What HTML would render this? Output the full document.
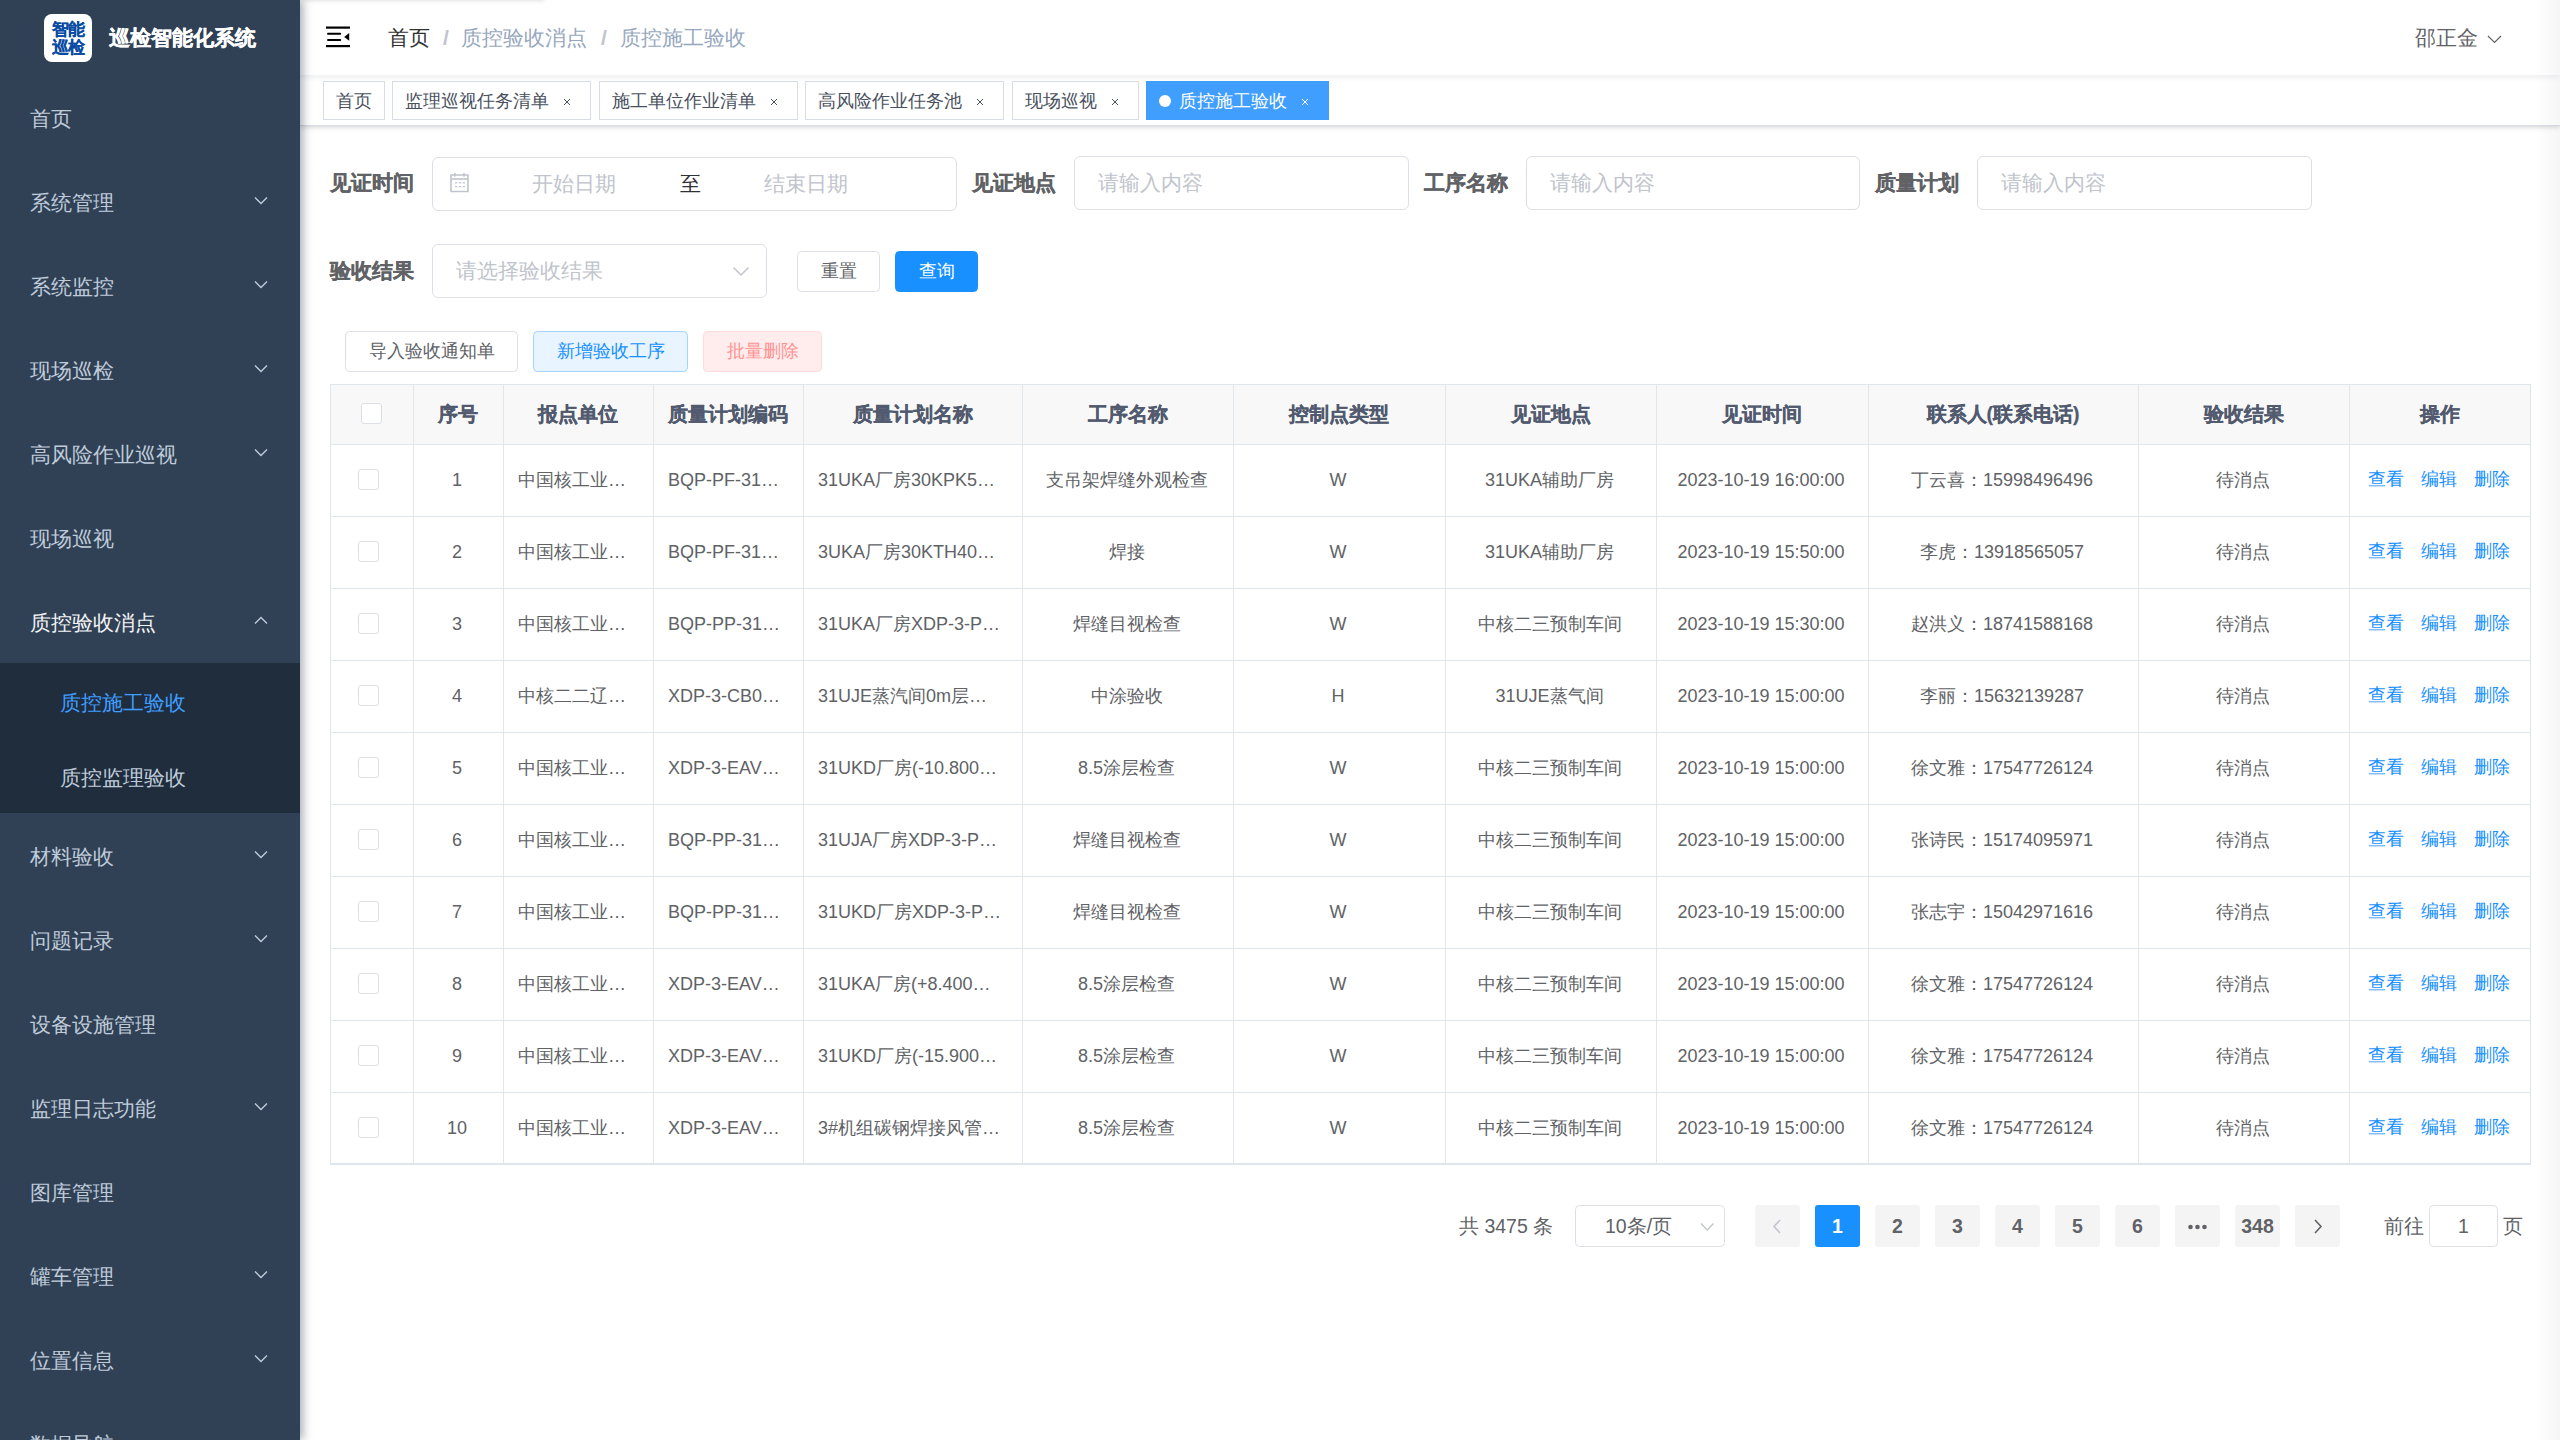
<!DOCTYPE html>
<html><head><meta charset="utf-8">
<style>
*{box-sizing:border-box;margin:0;padding:0}
html,body{width:2560px;height:1440px;overflow:hidden;background:#fff;font-family:"Liberation Sans",sans-serif;}
.abs{position:absolute}
#sidebar{position:absolute;left:0;top:0;width:300px;height:1440px;background:#304156;box-shadow:3px 0 9px rgba(0,21,41,.35);z-index:5;overflow:hidden}
.logo{position:absolute;left:44px;top:14px;width:48px;height:48px;background:#fff;border-radius:8px}
.logo span{position:absolute;left:0;width:48px;text-align:center;color:#0a4ba3;font-weight:bold;font-size:16.5px;line-height:17px;letter-spacing:-0.5px;-webkit-text-stroke:0.15px #0a4ba3}
.title{position:absolute;left:109px;top:0;height:75px;line-height:75px;color:#fff;font-weight:bold;font-size:21px;white-space:nowrap;-webkit-text-stroke:0.3px #fff}
.mi{position:absolute;left:0;width:300px;height:84px;line-height:84px;padding-top:2px;padding-left:30px;color:#bfcbd9;font-size:21px;white-space:nowrap}
.sub{position:absolute;left:0;width:300px;height:75px;line-height:75px;padding-top:2px;padding-left:60px;color:#bfcbd9;font-size:21px;background:#1f2d3d;white-space:nowrap}
.chev{position:absolute}
#navbar{position:absolute;left:300px;top:0;width:2260px;height:75px;background:#fff;box-shadow:0 1.5px 6px rgba(0,21,41,.08);z-index:3}
.bc{position:absolute;top:0;height:75px;line-height:75px;font-size:21px;white-space:nowrap}
#tags{position:absolute;left:300px;top:75px;width:2260px;height:51px;background:#fff;border-bottom:1px solid #d8dce5;box-shadow:0 1.5px 4.5px 0 rgba(0,0,0,.12),0 0 4.5px 0 rgba(0,0,0,.04);z-index:2}
.tag{position:absolute;top:6px;height:39px;line-height:37px;padding-top:1px;border:1px solid #d8dce5;color:#495060;background:#fff;font-size:18px;padding-left:12px;white-space:nowrap}
.tag .x{position:absolute}
.tag.act{background:#409eff;border-color:#409eff;color:#fff}
.dot{position:absolute;left:12px;top:13px;width:12px;height:12px;border-radius:50%;background:#fff}
.lbl{position:absolute;height:54px;line-height:54px;font-size:21px;font-weight:bold;color:#606266;white-space:nowrap;-webkit-text-stroke:0.3px #606266}
.inp{position:absolute;height:54px;border:1px solid #dcdfe6;border-radius:6px;background:#fff}
.ph{position:absolute;line-height:52px;font-size:21px;color:#c0c4cc;white-space:nowrap}
.btn{position:absolute;height:41px;line-height:39px;border:1px solid #dcdfe6;border-radius:4.5px;font-size:18px;text-align:center;color:#606266;background:#fff;white-space:nowrap}
table{border-collapse:collapse}
.th,.td{position:absolute;white-space:nowrap;text-align:center}
.th{font-size:19.5px;font-weight:bold;color:#515a6e;-webkit-text-stroke:0.25px #515a6e;line-height:60px;height:60px;top:384px}
.td{font-size:18px;color:#606266;line-height:72px;height:72px}
.cb{position:absolute;width:21px;height:21px;border:1px solid #dcdfe6;border-radius:3px;background:#fff}
.lnk{position:absolute;font-size:18px;color:#1890ff;white-space:nowrap}
.pg{position:absolute;top:1205px;height:42px;line-height:42px;width:45px;background:#f4f4f5;color:#606266;font-size:19.5px;font-weight:bold;text-align:center;border-radius:3px}
</style></head><body>

<div id="sidebar">
<div class="logo"><span style="top:7px">智能</span><span style="top:25px">巡检</span></div>
<div class="title">巡检智能化系统</div>
<div class="mi" style="top:75px">首页</div>
<div class="mi" style="top:159px">系统管理</div>
<svg class="chev" style="left:254px;top:195.5px" width="14" height="9" viewBox="0 0 14 9"><path d="M1 1.5 L7 7.5 L13 1.5" fill="none" stroke="#bfcbd9" stroke-width="1.4"/></svg>
<div class="mi" style="top:243px">系统监控</div>
<svg class="chev" style="left:254px;top:279.5px" width="14" height="9" viewBox="0 0 14 9"><path d="M1 1.5 L7 7.5 L13 1.5" fill="none" stroke="#bfcbd9" stroke-width="1.4"/></svg>
<div class="mi" style="top:327px">现场巡检</div>
<svg class="chev" style="left:254px;top:363.5px" width="14" height="9" viewBox="0 0 14 9"><path d="M1 1.5 L7 7.5 L13 1.5" fill="none" stroke="#bfcbd9" stroke-width="1.4"/></svg>
<div class="mi" style="top:411px">高风险作业巡视</div>
<svg class="chev" style="left:254px;top:447.5px" width="14" height="9" viewBox="0 0 14 9"><path d="M1 1.5 L7 7.5 L13 1.5" fill="none" stroke="#bfcbd9" stroke-width="1.4"/></svg>
<div class="mi" style="top:495px">现场巡视</div>
<div class="mi" style="top:579px;color:#f4f4f5">质控验收消点</div>
<svg class="chev" style="left:254px;top:615.5px" width="14" height="9" viewBox="0 0 14 9"><path d="M1 7.5 L7 1.5 L13 7.5" fill="none" stroke="#bfcbd9" stroke-width="1.4"/></svg>
<div class="sub" style="top:663px;color:#409eff">质控施工验收</div>
<div class="sub" style="top:738px">质控监理验收</div>
<div class="mi" style="top:813px">材料验收</div>
<svg class="chev" style="left:254px;top:849.5px" width="14" height="9" viewBox="0 0 14 9"><path d="M1 1.5 L7 7.5 L13 1.5" fill="none" stroke="#bfcbd9" stroke-width="1.4"/></svg>
<div class="mi" style="top:897px">问题记录</div>
<svg class="chev" style="left:254px;top:933.5px" width="14" height="9" viewBox="0 0 14 9"><path d="M1 1.5 L7 7.5 L13 1.5" fill="none" stroke="#bfcbd9" stroke-width="1.4"/></svg>
<div class="mi" style="top:981px">设备设施管理</div>
<div class="mi" style="top:1065px">监理日志功能</div>
<svg class="chev" style="left:254px;top:1101.5px" width="14" height="9" viewBox="0 0 14 9"><path d="M1 1.5 L7 7.5 L13 1.5" fill="none" stroke="#bfcbd9" stroke-width="1.4"/></svg>
<div class="mi" style="top:1149px">图库管理</div>
<div class="mi" style="top:1233px">罐车管理</div>
<svg class="chev" style="left:254px;top:1269.5px" width="14" height="9" viewBox="0 0 14 9"><path d="M1 1.5 L7 7.5 L13 1.5" fill="none" stroke="#bfcbd9" stroke-width="1.4"/></svg>
<div class="mi" style="top:1317px">位置信息</div>
<svg class="chev" style="left:254px;top:1353.5px" width="14" height="9" viewBox="0 0 14 9"><path d="M1 1.5 L7 7.5 L13 1.5" fill="none" stroke="#bfcbd9" stroke-width="1.4"/></svg>
<div class="mi" style="top:1401px">数据导航</div>
</div>
<div id="navbar">
<div class="abs" style="left:0;top:-8px;width:245px;height:8px;box-shadow:0 1px 4px rgba(0,0,0,.12);border-radius:4px"></div>
<svg class="abs" style="left:26px;top:26px" width="24" height="22" viewBox="0 0 24 22"><rect x="0" y="0.5" width="24" height="2.2" fill="#000"/><rect x="1" y="6.8" width="14.2" height="2" rx="1" fill="#000"/><rect x="1" y="13" width="14.2" height="2" rx="1" fill="#000"/><rect x="0" y="19" width="24" height="2.2" fill="#000"/><path d="M18.2 10.9 L23.2 7 L23.2 14.8 Z" fill="#000"/></svg>
<div class="bc" style="left:88px;color:#303133">首页</div>
<div class="bc" style="left:143px;color:#c0c4cc;font-weight:bold">/</div>
<div class="bc" style="left:161px;color:#97a8be">质控验收消点</div>
<div class="bc" style="left:301px;color:#c0c4cc;font-weight:bold">/</div>
<div class="bc" style="left:320px;color:#97a8be">质控施工验收</div>
<div class="bc" style="left:2115px;color:#606266">邵正金</div>
<svg class="abs" style="left:2187px;top:35px" width="15" height="9" viewBox="0 0 15 9"><path d="M1 1 L7.5 7.5 L14 1" fill="none" stroke="#606266" stroke-width="1.2"/></svg>
</div>
<div id="tags">
<div class="tag" style="left:23px;width:62px">首页</div>
<div class="tag" style="left:92px;width:199px">监理巡视任务清单<svg class="x" style="left:170px;top:16px" width="8" height="8" viewBox="0 0 8 8"><path d="M1 1 L7 7 M7 1 L1 7" stroke="#495060" stroke-width="1"/></svg></div>
<div class="tag" style="left:299px;width:199px">施工单位作业清单<svg class="x" style="left:170px;top:16px" width="8" height="8" viewBox="0 0 8 8"><path d="M1 1 L7 7 M7 1 L1 7" stroke="#495060" stroke-width="1"/></svg></div>
<div class="tag" style="left:505px;width:199px">高风险作业任务池<svg class="x" style="left:170px;top:16px" width="8" height="8" viewBox="0 0 8 8"><path d="M1 1 L7 7 M7 1 L1 7" stroke="#495060" stroke-width="1"/></svg></div>
<div class="tag" style="left:712px;width:127px">现场巡视<svg class="x" style="left:98px;top:16px" width="8" height="8" viewBox="0 0 8 8"><path d="M1 1 L7 7 M7 1 L1 7" stroke="#495060" stroke-width="1"/></svg></div>
<div class="tag act" style="left:846px;width:183px"><span class="dot"></span><span style="position:absolute;left:32px">质控施工验收</span><svg class="x" style="left:154px;top:16px" width="8" height="8" viewBox="0 0 8 8"><path d="M1 1 L7 7 M7 1 L1 7" stroke="#fff" stroke-width="1"/></svg></div>
</div>
<div class="lbl" style="left:330px;top:156px">见证时间</div>
<div class="inp" style="left:432px;top:157px;width:525px"></div>
<svg class="abs" style="left:449px;top:172px" width="21" height="21" viewBox="0 0 21 21"><path d="M2 3 H19 V19.5 H2 Z" fill="none" stroke="#c0c4cc" stroke-width="1.6"/><rect x="2" y="6.2" width="17" height="1.6" fill="#c0c4cc"/><rect x="5" y="1" width="1.6" height="3.6" fill="#c0c4cc"/><rect x="14.2" y="1" width="1.6" height="3.6" fill="#c0c4cc"/><g fill="#c0c4cc"><rect x="6" y="10.2" width="2.4" height="1.2"/><rect x="9.8" y="10.2" width="2.4" height="1.2"/><rect x="13.6" y="10.2" width="2.4" height="1.2"/><rect x="6" y="14" width="2.4" height="1.2"/><rect x="9.8" y="14" width="2.4" height="1.2"/><rect x="13.6" y="14" width="2.4" height="1.2"/></g></svg>
<div class="ph" style="left:532px;top:158px">开始日期</div>
<div class="ph" style="left:680px;top:158px;color:#303133">至</div>
<div class="ph" style="left:764px;top:158px">结束日期</div>
<div class="lbl" style="left:972px;top:156px">见证地点</div>
<div class="inp" style="left:1074px;top:156px;width:335px"><div class="ph" style="left:23px;top:0">请输入内容</div></div>
<div class="lbl" style="left:1424px;top:156px">工序名称</div>
<div class="inp" style="left:1526px;top:156px;width:334px"><div class="ph" style="left:23px;top:0">请输入内容</div></div>
<div class="lbl" style="left:1875px;top:156px">质量计划</div>
<div class="inp" style="left:1977px;top:156px;width:335px"><div class="ph" style="left:23px;top:0">请输入内容</div></div>
<div class="lbl" style="left:330px;top:244px">验收结果</div>
<div class="inp" style="left:432px;top:244px;width:335px"><div class="ph" style="left:23px;top:0">请选择验收结果</div></div>
<svg class="abs" style="left:732px;top:266px" width="18" height="11" viewBox="0 0 18 11"><path d="M1.5 1.5 L9 9 L16.5 1.5" fill="none" stroke="#c0c4cc" stroke-width="1.5"/></svg>
<div class="btn" style="left:797px;top:251px;width:83px">重置</div>
<div class="btn" style="left:895px;top:251px;width:83px;background:#1890ff;border-color:#1890ff;color:#fff">查询</div>
<div class="btn" style="left:345px;top:331px;width:173px">导入验收通知单</div>
<div class="btn" style="left:533px;top:331px;width:155px;background:#e8f4ff;border-color:#a3d3ff;color:#1890ff">新增验收工序</div>
<div class="btn" style="left:703px;top:331px;width:119px;background:#ffeded;border-color:#ffdbdb;color:#ff9292">批量删除</div>
<div class="abs" style="left:330px;top:384px;width:2201px;height:60px;background:#f8f8f9"></div>
<div class="abs" style="left:330px;top:384px;width:2201px;height:1px;background:#dfe6ec"></div>
<div class="abs" style="left:330px;top:444px;width:2201px;height:1px;background:#dfe6ec"></div>
<div class="abs" style="left:330px;top:516px;width:2201px;height:1px;background:#dfe6ec"></div>
<div class="abs" style="left:330px;top:588px;width:2201px;height:1px;background:#dfe6ec"></div>
<div class="abs" style="left:330px;top:660px;width:2201px;height:1px;background:#dfe6ec"></div>
<div class="abs" style="left:330px;top:732px;width:2201px;height:1px;background:#dfe6ec"></div>
<div class="abs" style="left:330px;top:804px;width:2201px;height:1px;background:#dfe6ec"></div>
<div class="abs" style="left:330px;top:876px;width:2201px;height:1px;background:#dfe6ec"></div>
<div class="abs" style="left:330px;top:948px;width:2201px;height:1px;background:#dfe6ec"></div>
<div class="abs" style="left:330px;top:1020px;width:2201px;height:1px;background:#dfe6ec"></div>
<div class="abs" style="left:330px;top:1092px;width:2201px;height:1px;background:#dfe6ec"></div>
<div class="abs" style="left:330px;top:1164px;width:2201px;height:1px;background:#dfe6ec"></div>
<div class="abs" style="left:330px;top:1163px;width:2201px;height:2px;background:#dfe6ec"></div>
<div class="abs" style="left:330px;top:384px;width:1px;height:780px;background:#dfe6ec"></div>
<div class="abs" style="left:413px;top:384px;width:1px;height:780px;background:#dfe6ec"></div>
<div class="abs" style="left:503px;top:384px;width:1px;height:780px;background:#dfe6ec"></div>
<div class="abs" style="left:653px;top:384px;width:1px;height:780px;background:#dfe6ec"></div>
<div class="abs" style="left:803px;top:384px;width:1px;height:780px;background:#dfe6ec"></div>
<div class="abs" style="left:1022px;top:384px;width:1px;height:780px;background:#dfe6ec"></div>
<div class="abs" style="left:1233px;top:384px;width:1px;height:780px;background:#dfe6ec"></div>
<div class="abs" style="left:1445px;top:384px;width:1px;height:780px;background:#dfe6ec"></div>
<div class="abs" style="left:1656px;top:384px;width:1px;height:780px;background:#dfe6ec"></div>
<div class="abs" style="left:1868px;top:384px;width:1px;height:780px;background:#dfe6ec"></div>
<div class="abs" style="left:2138px;top:384px;width:1px;height:780px;background:#dfe6ec"></div>
<div class="abs" style="left:2349px;top:384px;width:1px;height:780px;background:#dfe6ec"></div>
<div class="abs" style="left:2530px;top:384px;width:1px;height:780px;background:#dfe6ec"></div>
<div class="cb" style="left:361px;top:403px"></div>
<div class="th" style="left:413px;width:90px">序号</div>
<div class="th" style="left:503px;width:150px">报点单位</div>
<div class="th" style="left:653px;width:150px">质量计划编码</div>
<div class="th" style="left:803px;width:219px">质量计划名称</div>
<div class="th" style="left:1022px;width:211px">工序名称</div>
<div class="th" style="left:1233px;width:212px">控制点类型</div>
<div class="th" style="left:1445px;width:211px">见证地点</div>
<div class="th" style="left:1656px;width:212px">见证时间</div>
<div class="th" style="left:1868px;width:270px">联系人(联系电话)</div>
<div class="th" style="left:2138px;width:211px">验收结果</div>
<div class="th" style="left:2349px;width:181px">操作</div>
<div class="cb" style="left:358px;top:469px"></div>
<div class="td" style="left:412px;top:444px;width:90px">1</div>
<div class="td" style="left:518px;top:444px;text-align:left">中国核工业…</div>
<div class="td" style="left:668px;top:444px;text-align:left">BQP-PF-31…</div>
<div class="td" style="left:818px;top:444px;text-align:left">31UKA厂房30KPK5…</div>
<div class="td" style="left:1021px;top:444px;width:211px">支吊架焊缝外观检查</div>
<div class="td" style="left:1232px;top:444px;width:212px">W</div>
<div class="td" style="left:1444px;top:444px;width:211px">31UKA辅助厂房</div>
<div class="td" style="left:1655px;top:444px;width:212px">2023-10-19 16:00:00</div>
<div class="td" style="left:1867px;top:444px;width:270px">丁云喜：15998496496</div>
<div class="td" style="left:2137px;top:444px;width:211px">待消点</div>
<div class="td lnk" style="left:2368px;top:443px">查看</div>
<div class="td lnk" style="left:2421px;top:443px">编辑</div>
<div class="td lnk" style="left:2474px;top:443px">删除</div>
<div class="cb" style="left:358px;top:541px"></div>
<div class="td" style="left:412px;top:516px;width:90px">2</div>
<div class="td" style="left:518px;top:516px;text-align:left">中国核工业…</div>
<div class="td" style="left:668px;top:516px;text-align:left">BQP-PF-31…</div>
<div class="td" style="left:818px;top:516px;text-align:left">3UKA厂房30KTH40…</div>
<div class="td" style="left:1021px;top:516px;width:211px">焊接</div>
<div class="td" style="left:1232px;top:516px;width:212px">W</div>
<div class="td" style="left:1444px;top:516px;width:211px">31UKA辅助厂房</div>
<div class="td" style="left:1655px;top:516px;width:212px">2023-10-19 15:50:00</div>
<div class="td" style="left:1867px;top:516px;width:270px">李虎：13918565057</div>
<div class="td" style="left:2137px;top:516px;width:211px">待消点</div>
<div class="td lnk" style="left:2368px;top:515px">查看</div>
<div class="td lnk" style="left:2421px;top:515px">编辑</div>
<div class="td lnk" style="left:2474px;top:515px">删除</div>
<div class="cb" style="left:358px;top:613px"></div>
<div class="td" style="left:412px;top:588px;width:90px">3</div>
<div class="td" style="left:518px;top:588px;text-align:left">中国核工业…</div>
<div class="td" style="left:668px;top:588px;text-align:left">BQP-PP-31…</div>
<div class="td" style="left:818px;top:588px;text-align:left">31UKA厂房XDP-3-P…</div>
<div class="td" style="left:1021px;top:588px;width:211px">焊缝目视检查</div>
<div class="td" style="left:1232px;top:588px;width:212px">W</div>
<div class="td" style="left:1444px;top:588px;width:211px">中核二三预制车间</div>
<div class="td" style="left:1655px;top:588px;width:212px">2023-10-19 15:30:00</div>
<div class="td" style="left:1867px;top:588px;width:270px">赵洪义：18741588168</div>
<div class="td" style="left:2137px;top:588px;width:211px">待消点</div>
<div class="td lnk" style="left:2368px;top:587px">查看</div>
<div class="td lnk" style="left:2421px;top:587px">编辑</div>
<div class="td lnk" style="left:2474px;top:587px">删除</div>
<div class="cb" style="left:358px;top:685px"></div>
<div class="td" style="left:412px;top:660px;width:90px">4</div>
<div class="td" style="left:518px;top:660px;text-align:left">中核二二辽…</div>
<div class="td" style="left:668px;top:660px;text-align:left">XDP-3-CB0…</div>
<div class="td" style="left:818px;top:660px;text-align:left">31UJE蒸汽间0m层…</div>
<div class="td" style="left:1021px;top:660px;width:211px">中涂验收</div>
<div class="td" style="left:1232px;top:660px;width:212px">H</div>
<div class="td" style="left:1444px;top:660px;width:211px">31UJE蒸气间</div>
<div class="td" style="left:1655px;top:660px;width:212px">2023-10-19 15:00:00</div>
<div class="td" style="left:1867px;top:660px;width:270px">李丽：15632139287</div>
<div class="td" style="left:2137px;top:660px;width:211px">待消点</div>
<div class="td lnk" style="left:2368px;top:659px">查看</div>
<div class="td lnk" style="left:2421px;top:659px">编辑</div>
<div class="td lnk" style="left:2474px;top:659px">删除</div>
<div class="cb" style="left:358px;top:757px"></div>
<div class="td" style="left:412px;top:732px;width:90px">5</div>
<div class="td" style="left:518px;top:732px;text-align:left">中国核工业…</div>
<div class="td" style="left:668px;top:732px;text-align:left">XDP-3-EAV…</div>
<div class="td" style="left:818px;top:732px;text-align:left">31UKD厂房(-10.800…</div>
<div class="td" style="left:1021px;top:732px;width:211px">8.5涂层检查</div>
<div class="td" style="left:1232px;top:732px;width:212px">W</div>
<div class="td" style="left:1444px;top:732px;width:211px">中核二三预制车间</div>
<div class="td" style="left:1655px;top:732px;width:212px">2023-10-19 15:00:00</div>
<div class="td" style="left:1867px;top:732px;width:270px">徐文雅：17547726124</div>
<div class="td" style="left:2137px;top:732px;width:211px">待消点</div>
<div class="td lnk" style="left:2368px;top:731px">查看</div>
<div class="td lnk" style="left:2421px;top:731px">编辑</div>
<div class="td lnk" style="left:2474px;top:731px">删除</div>
<div class="cb" style="left:358px;top:829px"></div>
<div class="td" style="left:412px;top:804px;width:90px">6</div>
<div class="td" style="left:518px;top:804px;text-align:left">中国核工业…</div>
<div class="td" style="left:668px;top:804px;text-align:left">BQP-PP-31…</div>
<div class="td" style="left:818px;top:804px;text-align:left">31UJA厂房XDP-3-P…</div>
<div class="td" style="left:1021px;top:804px;width:211px">焊缝目视检查</div>
<div class="td" style="left:1232px;top:804px;width:212px">W</div>
<div class="td" style="left:1444px;top:804px;width:211px">中核二三预制车间</div>
<div class="td" style="left:1655px;top:804px;width:212px">2023-10-19 15:00:00</div>
<div class="td" style="left:1867px;top:804px;width:270px">张诗民：15174095971</div>
<div class="td" style="left:2137px;top:804px;width:211px">待消点</div>
<div class="td lnk" style="left:2368px;top:803px">查看</div>
<div class="td lnk" style="left:2421px;top:803px">编辑</div>
<div class="td lnk" style="left:2474px;top:803px">删除</div>
<div class="cb" style="left:358px;top:901px"></div>
<div class="td" style="left:412px;top:876px;width:90px">7</div>
<div class="td" style="left:518px;top:876px;text-align:left">中国核工业…</div>
<div class="td" style="left:668px;top:876px;text-align:left">BQP-PP-31…</div>
<div class="td" style="left:818px;top:876px;text-align:left">31UKD厂房XDP-3-P…</div>
<div class="td" style="left:1021px;top:876px;width:211px">焊缝目视检查</div>
<div class="td" style="left:1232px;top:876px;width:212px">W</div>
<div class="td" style="left:1444px;top:876px;width:211px">中核二三预制车间</div>
<div class="td" style="left:1655px;top:876px;width:212px">2023-10-19 15:00:00</div>
<div class="td" style="left:1867px;top:876px;width:270px">张志宇：15042971616</div>
<div class="td" style="left:2137px;top:876px;width:211px">待消点</div>
<div class="td lnk" style="left:2368px;top:875px">查看</div>
<div class="td lnk" style="left:2421px;top:875px">编辑</div>
<div class="td lnk" style="left:2474px;top:875px">删除</div>
<div class="cb" style="left:358px;top:973px"></div>
<div class="td" style="left:412px;top:948px;width:90px">8</div>
<div class="td" style="left:518px;top:948px;text-align:left">中国核工业…</div>
<div class="td" style="left:668px;top:948px;text-align:left">XDP-3-EAV…</div>
<div class="td" style="left:818px;top:948px;text-align:left">31UKA厂房(+8.400…</div>
<div class="td" style="left:1021px;top:948px;width:211px">8.5涂层检查</div>
<div class="td" style="left:1232px;top:948px;width:212px">W</div>
<div class="td" style="left:1444px;top:948px;width:211px">中核二三预制车间</div>
<div class="td" style="left:1655px;top:948px;width:212px">2023-10-19 15:00:00</div>
<div class="td" style="left:1867px;top:948px;width:270px">徐文雅：17547726124</div>
<div class="td" style="left:2137px;top:948px;width:211px">待消点</div>
<div class="td lnk" style="left:2368px;top:947px">查看</div>
<div class="td lnk" style="left:2421px;top:947px">编辑</div>
<div class="td lnk" style="left:2474px;top:947px">删除</div>
<div class="cb" style="left:358px;top:1045px"></div>
<div class="td" style="left:412px;top:1020px;width:90px">9</div>
<div class="td" style="left:518px;top:1020px;text-align:left">中国核工业…</div>
<div class="td" style="left:668px;top:1020px;text-align:left">XDP-3-EAV…</div>
<div class="td" style="left:818px;top:1020px;text-align:left">31UKD厂房(-15.900…</div>
<div class="td" style="left:1021px;top:1020px;width:211px">8.5涂层检查</div>
<div class="td" style="left:1232px;top:1020px;width:212px">W</div>
<div class="td" style="left:1444px;top:1020px;width:211px">中核二三预制车间</div>
<div class="td" style="left:1655px;top:1020px;width:212px">2023-10-19 15:00:00</div>
<div class="td" style="left:1867px;top:1020px;width:270px">徐文雅：17547726124</div>
<div class="td" style="left:2137px;top:1020px;width:211px">待消点</div>
<div class="td lnk" style="left:2368px;top:1019px">查看</div>
<div class="td lnk" style="left:2421px;top:1019px">编辑</div>
<div class="td lnk" style="left:2474px;top:1019px">删除</div>
<div class="cb" style="left:358px;top:1117px"></div>
<div class="td" style="left:412px;top:1092px;width:90px">10</div>
<div class="td" style="left:518px;top:1092px;text-align:left">中国核工业…</div>
<div class="td" style="left:668px;top:1092px;text-align:left">XDP-3-EAV…</div>
<div class="td" style="left:818px;top:1092px;text-align:left">3#机组碳钢焊接风管…</div>
<div class="td" style="left:1021px;top:1092px;width:211px">8.5涂层检查</div>
<div class="td" style="left:1232px;top:1092px;width:212px">W</div>
<div class="td" style="left:1444px;top:1092px;width:211px">中核二三预制车间</div>
<div class="td" style="left:1655px;top:1092px;width:212px">2023-10-19 15:00:00</div>
<div class="td" style="left:1867px;top:1092px;width:270px">徐文雅：17547726124</div>
<div class="td" style="left:2137px;top:1092px;width:211px">待消点</div>
<div class="td lnk" style="left:2368px;top:1091px">查看</div>
<div class="td lnk" style="left:2421px;top:1091px">编辑</div>
<div class="td lnk" style="left:2474px;top:1091px">删除</div>
<div class="abs" style="left:1459px;top:1205px;height:42px;line-height:42px;font-size:19.5px;color:#606266;white-space:nowrap">共 3475 条</div>
<div class="inp" style="left:1575px;top:1205px;width:150px;height:42px;border-radius:4.5px"><div class="ph" style="left:29px;top:0;line-height:40px;color:#606266;font-size:19.5px">10条/页</div></div>
<svg class="abs" style="left:1700px;top:1222px" width="15" height="10" viewBox="0 0 15 10"><path d="M1 1.5 L7.2 8 L13.5 1.5" fill="none" stroke="#c0c4cc" stroke-width="1.3"/></svg>
<div class="pg" style="left:1755px"><svg style="position:absolute;left:17px;top:14px" width="10" height="15" viewBox="0 0 10 15"><path d="M8 1 L2 7.5 L8 14" fill="none" stroke="#c0c4cc" stroke-width="1.6"/></svg></div>
<div class="pg" style="left:1815px;background:#1890ff;color:#fff">1</div>
<div class="pg" style="left:1875px">2</div>
<div class="pg" style="left:1935px">3</div>
<div class="pg" style="left:1995px">4</div>
<div class="pg" style="left:2055px">5</div>
<div class="pg" style="left:2115px">6</div>
<div class="pg" style="left:2175px"><svg style="position:absolute;left:12px;top:19px" width="22" height="6" viewBox="0 0 22 6"><circle cx="3.5" cy="3" r="2.3" fill="#606266"/><circle cx="10.5" cy="3" r="2.3" fill="#606266"/><circle cx="17.5" cy="3" r="2.3" fill="#606266"/></svg></div>
<div class="pg" style="left:2235px">348</div>
<div class="pg" style="left:2295px"><svg style="position:absolute;left:18px;top:14px" width="10" height="15" viewBox="0 0 10 15"><path d="M2 1 L8 7.5 L2 14" fill="none" stroke="#606266" stroke-width="1.6"/></svg></div>
<div class="abs" style="left:2384px;top:1205px;height:42px;line-height:42px;font-size:19.5px;color:#606266;white-space:nowrap">前往</div>
<div class="inp" style="left:2429px;top:1205px;width:69px;height:42px;border-radius:4.5px"><div class="ph" style="left:0;width:67px;text-align:center;top:0;line-height:40px;color:#606266;font-size:19.5px">1</div></div>
<div class="abs" style="left:2503px;top:1205px;height:42px;line-height:42px;font-size:19.5px;color:#606266;white-space:nowrap">页</div>
<div class="abs" style="left:2535px;top:0;width:25px;height:1440px;background:linear-gradient(to right,rgba(0,0,40,0),rgba(0,0,40,.035));z-index:20"></div>
</body></html>
